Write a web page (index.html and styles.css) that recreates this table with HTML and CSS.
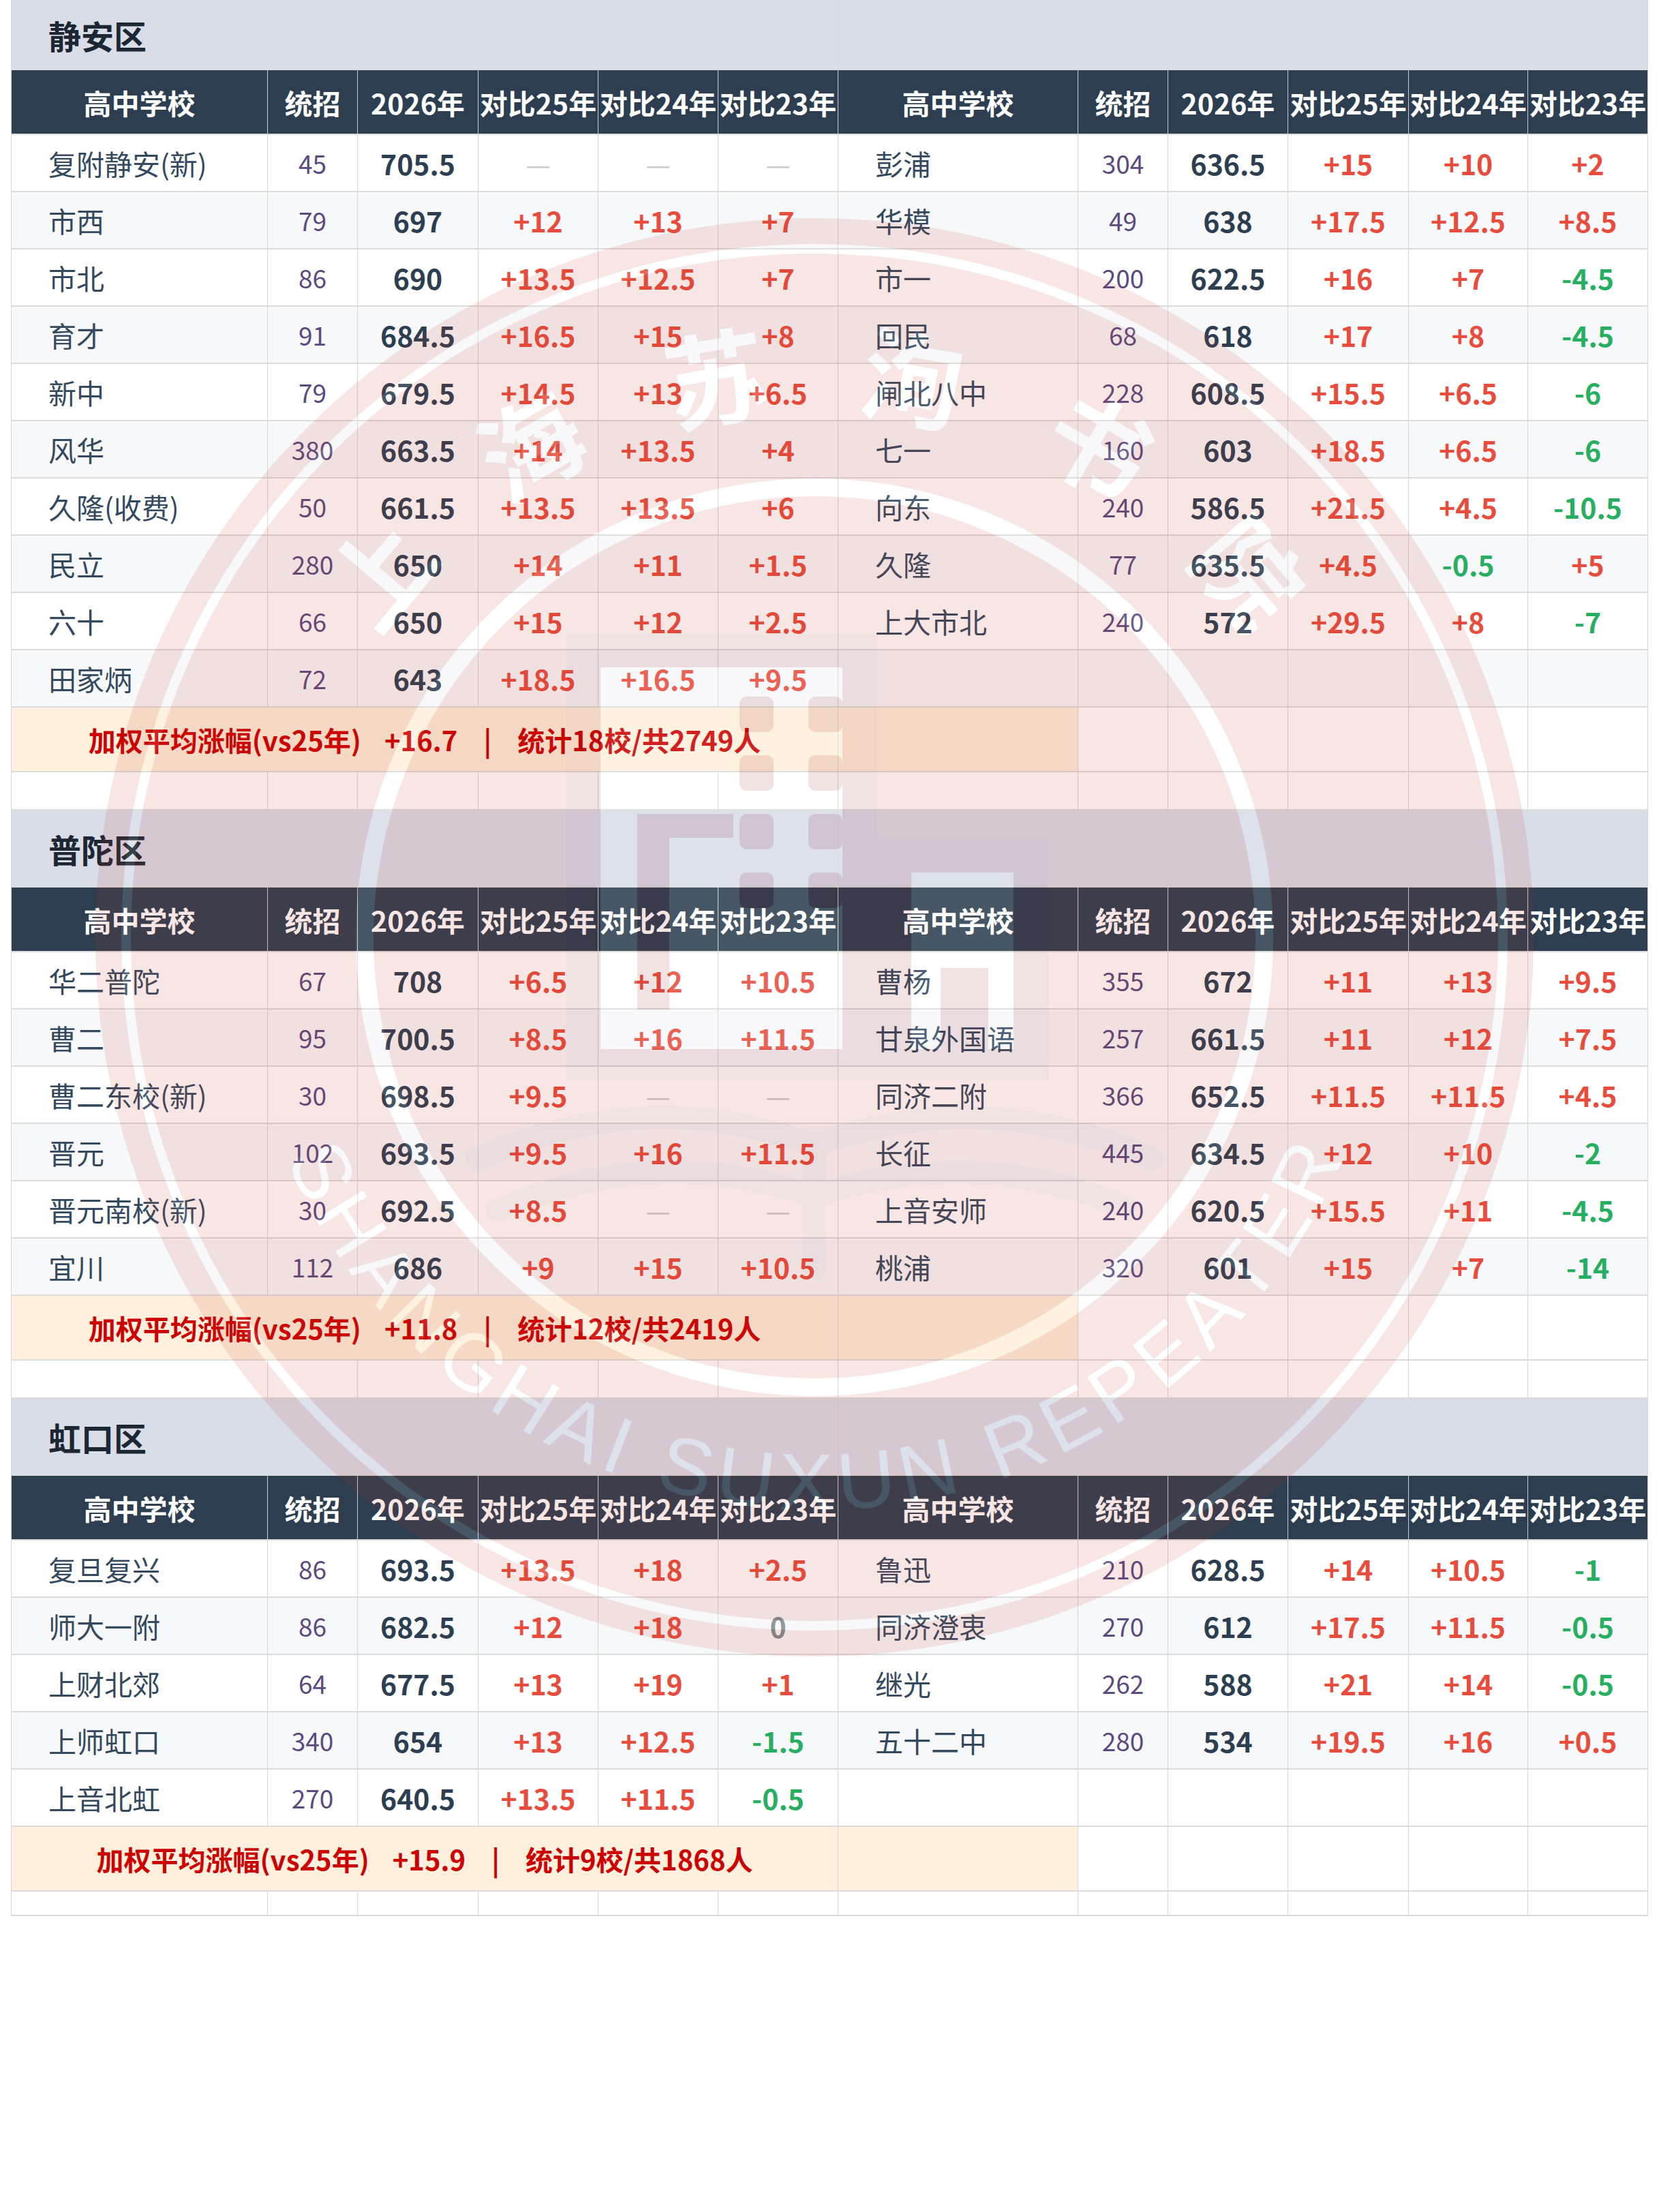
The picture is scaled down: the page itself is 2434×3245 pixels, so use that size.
FILE: index.html
```html
<!DOCTYPE html>
<html lang="zh-CN">
<head>
<meta charset="utf-8">
<title>中考分数线对比</title>
<link rel="stylesheet" href="styles.css">
</head>
<body>
<div class="page">
  <div class="sheet">

    <section class="sec">
      <div class="row band first"><div class="cell title">静安区</div><div class="cell title-r"></div></div>
      <div class="row head">
        <div class="cell">高中学校</div><div class="cell">统招</div><div class="cell">2026年</div><div class="cell">对比25年</div><div class="cell">对比24年</div><div class="cell">对比23年</div>
        <div class="cell">高中学校</div><div class="cell">统招</div><div class="cell">2026年</div><div class="cell">对比25年</div><div class="cell">对比24年</div><div class="cell">对比23年</div>
      </div>
      <div class="row">
        <div class="cell nm">复附静安(新)</div><div class="cell ct">45</div><div class="cell sc">705.5</div><div class="cell na">—</div><div class="cell na">—</div><div class="cell na">—</div>
        <div class="cell nm">彭浦</div><div class="cell ct">304</div><div class="cell sc">636.5</div><div class="cell up">+15</div><div class="cell up">+10</div><div class="cell up">+2</div>
      </div>
      <div class="row alt">
        <div class="cell nm">市西</div><div class="cell ct">79</div><div class="cell sc">697</div><div class="cell up">+12</div><div class="cell up">+13</div><div class="cell up">+7</div>
        <div class="cell nm">华模</div><div class="cell ct">49</div><div class="cell sc">638</div><div class="cell up">+17.5</div><div class="cell up">+12.5</div><div class="cell up">+8.5</div>
      </div>
      <div class="row">
        <div class="cell nm">市北</div><div class="cell ct">86</div><div class="cell sc">690</div><div class="cell up">+13.5</div><div class="cell up">+12.5</div><div class="cell up">+7</div>
        <div class="cell nm">市一</div><div class="cell ct">200</div><div class="cell sc">622.5</div><div class="cell up">+16</div><div class="cell up">+7</div><div class="cell dn">-4.5</div>
      </div>
      <div class="row alt">
        <div class="cell nm">育才</div><div class="cell ct">91</div><div class="cell sc">684.5</div><div class="cell up">+16.5</div><div class="cell up">+15</div><div class="cell up">+8</div>
        <div class="cell nm">回民</div><div class="cell ct">68</div><div class="cell sc">618</div><div class="cell up">+17</div><div class="cell up">+8</div><div class="cell dn">-4.5</div>
      </div>
      <div class="row">
        <div class="cell nm">新中</div><div class="cell ct">79</div><div class="cell sc">679.5</div><div class="cell up">+14.5</div><div class="cell up">+13</div><div class="cell up">+6.5</div>
        <div class="cell nm">闸北八中</div><div class="cell ct">228</div><div class="cell sc">608.5</div><div class="cell up">+15.5</div><div class="cell up">+6.5</div><div class="cell dn">-6</div>
      </div>
      <div class="row alt">
        <div class="cell nm">风华</div><div class="cell ct">380</div><div class="cell sc">663.5</div><div class="cell up">+14</div><div class="cell up">+13.5</div><div class="cell up">+4</div>
        <div class="cell nm">七一</div><div class="cell ct">160</div><div class="cell sc">603</div><div class="cell up">+18.5</div><div class="cell up">+6.5</div><div class="cell dn">-6</div>
      </div>
      <div class="row">
        <div class="cell nm">久隆(收费)</div><div class="cell ct">50</div><div class="cell sc">661.5</div><div class="cell up">+13.5</div><div class="cell up">+13.5</div><div class="cell up">+6</div>
        <div class="cell nm">向东</div><div class="cell ct">240</div><div class="cell sc">586.5</div><div class="cell up">+21.5</div><div class="cell up">+4.5</div><div class="cell dn">-10.5</div>
      </div>
      <div class="row alt">
        <div class="cell nm">民立</div><div class="cell ct">280</div><div class="cell sc">650</div><div class="cell up">+14</div><div class="cell up">+11</div><div class="cell up">+1.5</div>
        <div class="cell nm">久隆</div><div class="cell ct">77</div><div class="cell sc">635.5</div><div class="cell up">+4.5</div><div class="cell dn">-0.5</div><div class="cell up">+5</div>
      </div>
      <div class="row">
        <div class="cell nm">六十</div><div class="cell ct">66</div><div class="cell sc">650</div><div class="cell up">+15</div><div class="cell up">+12</div><div class="cell up">+2.5</div>
        <div class="cell nm">上大市北</div><div class="cell ct">240</div><div class="cell sc">572</div><div class="cell up">+29.5</div><div class="cell up">+8</div><div class="cell dn">-7</div>
      </div>
      <div class="row alt">
        <div class="cell nm">田家炳</div><div class="cell ct">72</div><div class="cell sc">643</div><div class="cell up">+18.5</div><div class="cell up">+16.5</div><div class="cell up">+9.5</div>
        <div class="cell"></div><div class="cell"></div><div class="cell"></div><div class="cell"></div><div class="cell"></div><div class="cell"></div>
      </div>
      <div class="row sum-row">
        <div class="cell sum"><span>加权平均涨幅(vs25年)</span><span class="v">+16.7</span><span class="bar">|</span><span>统计18校/共2749人</span></div>
        <div class="cell cream"></div><div class="cell"></div><div class="cell"></div><div class="cell"></div><div class="cell"></div><div class="cell"></div>
      </div>
      <div class="row sp">
        <div class="cell"></div><div class="cell"></div><div class="cell"></div><div class="cell"></div><div class="cell"></div><div class="cell"></div>
        <div class="cell"></div><div class="cell"></div><div class="cell"></div><div class="cell"></div><div class="cell"></div><div class="cell"></div>
      </div>
    </section>

    <section class="sec">
      <div class="row band"><div class="cell title">普陀区</div><div class="cell title-r"></div></div>
      <div class="row head">
        <div class="cell">高中学校</div><div class="cell">统招</div><div class="cell">2026年</div><div class="cell">对比25年</div><div class="cell">对比24年</div><div class="cell">对比23年</div>
        <div class="cell">高中学校</div><div class="cell">统招</div><div class="cell">2026年</div><div class="cell">对比25年</div><div class="cell">对比24年</div><div class="cell">对比23年</div>
      </div>
      <div class="row">
        <div class="cell nm">华二普陀</div><div class="cell ct">67</div><div class="cell sc">708</div><div class="cell up">+6.5</div><div class="cell up">+12</div><div class="cell up">+10.5</div>
        <div class="cell nm">曹杨</div><div class="cell ct">355</div><div class="cell sc">672</div><div class="cell up">+11</div><div class="cell up">+13</div><div class="cell up">+9.5</div>
      </div>
      <div class="row alt">
        <div class="cell nm">曹二</div><div class="cell ct">95</div><div class="cell sc">700.5</div><div class="cell up">+8.5</div><div class="cell up">+16</div><div class="cell up">+11.5</div>
        <div class="cell nm">甘泉外国语</div><div class="cell ct">257</div><div class="cell sc">661.5</div><div class="cell up">+11</div><div class="cell up">+12</div><div class="cell up">+7.5</div>
      </div>
      <div class="row">
        <div class="cell nm">曹二东校(新)</div><div class="cell ct">30</div><div class="cell sc">698.5</div><div class="cell up">+9.5</div><div class="cell na">—</div><div class="cell na">—</div>
        <div class="cell nm">同济二附</div><div class="cell ct">366</div><div class="cell sc">652.5</div><div class="cell up">+11.5</div><div class="cell up">+11.5</div><div class="cell up">+4.5</div>
      </div>
      <div class="row alt">
        <div class="cell nm">晋元</div><div class="cell ct">102</div><div class="cell sc">693.5</div><div class="cell up">+9.5</div><div class="cell up">+16</div><div class="cell up">+11.5</div>
        <div class="cell nm">长征</div><div class="cell ct">445</div><div class="cell sc">634.5</div><div class="cell up">+12</div><div class="cell up">+10</div><div class="cell dn">-2</div>
      </div>
      <div class="row">
        <div class="cell nm">晋元南校(新)</div><div class="cell ct">30</div><div class="cell sc">692.5</div><div class="cell up">+8.5</div><div class="cell na">—</div><div class="cell na">—</div>
        <div class="cell nm">上音安师</div><div class="cell ct">240</div><div class="cell sc">620.5</div><div class="cell up">+15.5</div><div class="cell up">+11</div><div class="cell dn">-4.5</div>
      </div>
      <div class="row alt">
        <div class="cell nm">宜川</div><div class="cell ct">112</div><div class="cell sc">686</div><div class="cell up">+9</div><div class="cell up">+15</div><div class="cell up">+10.5</div>
        <div class="cell nm">桃浦</div><div class="cell ct">320</div><div class="cell sc">601</div><div class="cell up">+15</div><div class="cell up">+7</div><div class="cell dn">-14</div>
      </div>
      <div class="row sum-row">
        <div class="cell sum"><span>加权平均涨幅(vs25年)</span><span class="v">+11.8</span><span class="bar">|</span><span>统计12校/共2419人</span></div>
        <div class="cell cream"></div><div class="cell"></div><div class="cell"></div><div class="cell"></div><div class="cell"></div><div class="cell"></div>
      </div>
      <div class="row sp">
        <div class="cell"></div><div class="cell"></div><div class="cell"></div><div class="cell"></div><div class="cell"></div><div class="cell"></div>
        <div class="cell"></div><div class="cell"></div><div class="cell"></div><div class="cell"></div><div class="cell"></div><div class="cell"></div>
      </div>
    </section>

    <section class="sec">
      <div class="row band"><div class="cell title">虹口区</div><div class="cell title-r"></div></div>
      <div class="row head">
        <div class="cell">高中学校</div><div class="cell">统招</div><div class="cell">2026年</div><div class="cell">对比25年</div><div class="cell">对比24年</div><div class="cell">对比23年</div>
        <div class="cell">高中学校</div><div class="cell">统招</div><div class="cell">2026年</div><div class="cell">对比25年</div><div class="cell">对比24年</div><div class="cell">对比23年</div>
      </div>
      <div class="row">
        <div class="cell nm">复旦复兴</div><div class="cell ct">86</div><div class="cell sc">693.5</div><div class="cell up">+13.5</div><div class="cell up">+18</div><div class="cell up">+2.5</div>
        <div class="cell nm">鲁迅</div><div class="cell ct">210</div><div class="cell sc">628.5</div><div class="cell up">+14</div><div class="cell up">+10.5</div><div class="cell dn">-1</div>
      </div>
      <div class="row alt">
        <div class="cell nm">师大一附</div><div class="cell ct">86</div><div class="cell sc">682.5</div><div class="cell up">+12</div><div class="cell up">+18</div><div class="cell zr">0</div>
        <div class="cell nm">同济澄衷</div><div class="cell ct">270</div><div class="cell sc">612</div><div class="cell up">+17.5</div><div class="cell up">+11.5</div><div class="cell dn">-0.5</div>
      </div>
      <div class="row">
        <div class="cell nm">上财北郊</div><div class="cell ct">64</div><div class="cell sc">677.5</div><div class="cell up">+13</div><div class="cell up">+19</div><div class="cell up">+1</div>
        <div class="cell nm">继光</div><div class="cell ct">262</div><div class="cell sc">588</div><div class="cell up">+21</div><div class="cell up">+14</div><div class="cell dn">-0.5</div>
      </div>
      <div class="row alt">
        <div class="cell nm">上师虹口</div><div class="cell ct">340</div><div class="cell sc">654</div><div class="cell up">+13</div><div class="cell up">+12.5</div><div class="cell dn">-1.5</div>
        <div class="cell nm">五十二中</div><div class="cell ct">280</div><div class="cell sc">534</div><div class="cell up">+19.5</div><div class="cell up">+16</div><div class="cell up">+0.5</div>
      </div>
      <div class="row">
        <div class="cell nm">上音北虹</div><div class="cell ct">270</div><div class="cell sc">640.5</div><div class="cell up">+13.5</div><div class="cell up">+11.5</div><div class="cell dn">-0.5</div>
        <div class="cell"></div><div class="cell"></div><div class="cell"></div><div class="cell"></div><div class="cell"></div><div class="cell"></div>
      </div>
      <div class="row sum-row">
        <div class="cell sum"><span>加权平均涨幅(vs25年)</span><span class="v">+15.9</span><span class="bar">|</span><span>统计9校/共1868人</span></div>
        <div class="cell cream"></div><div class="cell"></div><div class="cell"></div><div class="cell"></div><div class="cell"></div><div class="cell"></div>
      </div>
      <div class="row sp end">
        <div class="cell"></div><div class="cell"></div><div class="cell"></div><div class="cell"></div><div class="cell"></div><div class="cell"></div>
        <div class="cell"></div><div class="cell"></div><div class="cell"></div><div class="cell"></div><div class="cell"></div><div class="cell"></div>
      </div>
    </section>

  </div>

  <svg class="wm" viewBox="0 0 2434 3245" aria-hidden="true">
    <circle cx="1195" cy="1375" r="1055" fill="#c0392b"/>
    <circle cx="1195" cy="1375" r="1010" fill="none" stroke="#ffffff" stroke-width="14"/>
    <circle cx="1195" cy="1375" r="660" fill="none" stroke="#ffffff" stroke-width="26"/>
    <g class="wm-cn">
      <text transform="translate(1195 1375) rotate(-50) translate(0 -840)">上</text>
      <text transform="translate(1195 1375) rotate(-30) translate(0 -840)">海</text>
      <text transform="translate(1195 1375) rotate(-10) translate(0 -840)">苏</text>
      <text transform="translate(1195 1375) rotate(10) translate(0 -840)">洵</text>
      <text transform="translate(1195 1375) rotate(30) translate(0 -840)">书</text>
      <text transform="translate(1195 1375) rotate(50) translate(0 -840)">院</text>
    </g>
    <g class="wm-en">
      <text transform="translate(1195 1375) rotate(64.60) translate(0 840)">S</text>
      <text transform="translate(1195 1375) rotate(58.26) translate(0 840)">H</text>
      <text transform="translate(1195 1375) rotate(51.92) translate(0 840)">A</text>
      <text transform="translate(1195 1375) rotate(45.58) translate(0 840)">N</text>
      <text transform="translate(1195 1375) rotate(38.79) translate(0 840)">G</text>
      <text transform="translate(1195 1375) rotate(32.01) translate(0 840)">H</text>
      <text transform="translate(1195 1375) rotate(25.66) translate(0 840)">A</text>
      <text transform="translate(1195 1375) rotate(21.11) translate(0 840)">I</text>
      <text transform="translate(1195 1375) rotate(13.57) translate(0 840)">S</text>
      <text transform="translate(1195 1375) rotate(7.23) translate(0 840)">U</text>
      <text transform="translate(1195 1375) rotate(0.89) translate(0 840)">X</text>
      <text transform="translate(1195 1375) rotate(-5.45) translate(0 840)">U</text>
      <text transform="translate(1195 1375) rotate(-12.01) translate(0 840)">N</text>
      <text transform="translate(1195 1375) rotate(-21.56) translate(0 840)">R</text>
      <text transform="translate(1195 1375) rotate(-27.90) translate(0 840)">E</text>
      <text transform="translate(1195 1375) rotate(-34.02) translate(0 840)">P</text>
      <text transform="translate(1195 1375) rotate(-40.14) translate(0 840)">E</text>
      <text transform="translate(1195 1375) rotate(-46.26) translate(0 840)">A</text>
      <text transform="translate(1195 1375) rotate(-52.15) translate(0 840)">T</text>
      <text transform="translate(1195 1375) rotate(-58.04) translate(0 840)">E</text>
      <text transform="translate(1195 1375) rotate(-64.38) translate(0 840)">R</text>
    </g>
    <g fill="#9a2222">
      <path d="M831 930 H1287 V1229 H1539 V1585 H831 Z"/>
    </g>
    <g fill="#ffffff">
      <rect x="881" y="979" width="355" height="560"/>
      <rect x="1337" y="1280" width="150" height="259"/>
    </g>
    <g fill="#9a2222">
      <rect x="1085" y="1022" width="50" height="52" rx="10"/>
      <rect x="1186" y="1022" width="50" height="52" rx="10"/>
      <rect x="1085" y="1108" width="50" height="52" rx="10"/>
      <rect x="1186" y="1108" width="50" height="52" rx="10"/>
      <rect x="1085" y="1194" width="50" height="52" rx="10"/>
      <rect x="1186" y="1194" width="50" height="52" rx="10"/>
      <rect x="1085" y="1280" width="50" height="52" rx="10"/>
      <rect x="1186" y="1280" width="50" height="52" rx="10"/>
      <rect x="935" y="1194" width="47" height="287"/>
      <rect x="935" y="1194" width="141" height="35"/>
      <rect x="1380" y="1420" width="70" height="119"/>
    </g>
    <g fill="none" stroke="#9a2222" stroke-width="34" stroke-linecap="round">
      <path d="M700 1700 Q950 1590 1195 1680"/>
      <path d="M1195 1680 Q1440 1590 1690 1700"/>
      <path d="M730 1775 Q960 1675 1195 1755"/>
      <path d="M1195 1755 Q1430 1675 1660 1775"/>
      <path d="M1195 1680 V1860"/>
    </g>
  </svg>
</div>
</body>
</html>
```

FILE: styles.css
```css
html, body {
  margin: 0;
  padding: 0;
  background: #ffffff;
}

body {
  font-family: "Noto Sans CJK SC", "Noto Sans", sans-serif;
  color: #34495e;
}

.page {
  position: relative;
  width: 2434px;
  min-height: 3245px;
  overflow: hidden;
}

.sheet {
  padding-left: 16px;
  width: 2402px;
}

.sec {
  display: grid;
  grid-template-columns: 377px 132px 177px 176px 176px 176px 352px 132px 176px 177px 175px 176px;
}

.row {
  display: contents;
}

.cell {
  box-sizing: border-box;
  height: 84px;
  display: flex;
  align-items: center;
  justify-content: center;
  white-space: nowrap;
  background: #ffffff;
  border-right: 1px solid #d6d6d6;
  border-bottom: 2px solid #dcdcdc;
  font-size: 41px;
}

.row > .cell:first-child {
  border-left: 1px solid #d6d6d6;
}

.row.alt > .cell {
  background: #f7f8fa;
}

/* district band */
.band > .cell {
  height: 113px;
  background: #d9dde8;
}

.band.first > .cell {
  height: 103px;
}

.title {
  grid-column: span 6;
  justify-content: flex-start;
  padding-left: 54px;
  font-size: 48px;
  font-weight: 700;
  color: #1c2733;
}

.title-r {
  grid-column: span 6;
}

/* header */
.head > .cell {
  height: 95px;
  background: #2c3e50;
  color: #ffffff;
  font-weight: 700;
  font-size: 41px;
  border-right-color: #c9cdd3;
}

/* data cells */
.nm {
  justify-content: flex-start;
  padding-left: 54px;
  color: #34495e;
  font-weight: 400;
}

.ct {
  font-size: 37px;
  color: #5b4a7e;
}

.sc {
  font-weight: 700;
  color: #2c3e50;
}

.up {
  font-weight: 700;
  color: #e74c3c;
}

.dn {
  font-weight: 700;
  color: #27ae60;
}

.zr {
  font-weight: 700;
  color: #7f8c8d;
}

.na {
  color: #c9ccd1;
  font-size: 41px;
}

/* summary */
.sum-row > .cell {
  height: 95px;
}

.sum-row > .sum {
  grid-column: span 6;
  background: #fef0dc;
  color: #cc0000;
  font-weight: 700;
  font-size: 40px;
}

.sum-row > .cream {
  background: #fef0dc;
}

.sum .v {
  margin-left: 34px;
}

.sum .bar {
  margin: 0 38px;
}

/* spacer */
.sp > .cell {
  height: 56px;
}

.sp.end > .cell {
  height: 36px;
}

/* watermark overlay */
.wm {
  position: absolute;
  left: 0;
  top: 0;
  width: 2434px;
  height: 3245px;
  pointer-events: none;
  opacity: 0.12;
}

.wm-cn {
  font-family: "Noto Sans CJK SC", sans-serif;
  font-size: 150px;
  font-weight: 700;
  fill: #ffffff;
  text-anchor: middle;
  dominant-baseline: central;
}

.wm-en {
  font-family: "Liberation Sans", Arial, sans-serif;
  font-size: 118px;
  fill: #ffffff;
  text-anchor: middle;
}
```
